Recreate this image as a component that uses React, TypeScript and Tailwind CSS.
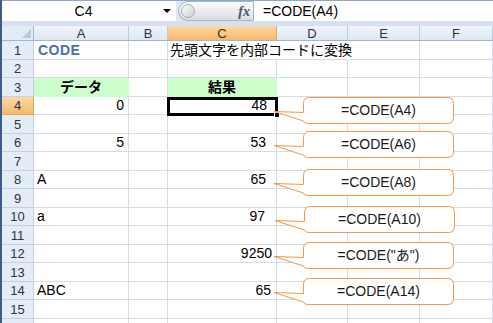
import React from "react";

const cols = [
  { key: "A", w: "w-[95px]" },
  { key: "B", w: "w-[39px]" },
  { key: "C", w: "w-[109px]" },
  { key: "D", w: "w-[71px]" },
  { key: "E", w: "w-[72px]" },
  { key: "F", w: "flex-1" },
];

const rowHeights = [19, 18, 19, 18, 19, 18, 19, 18, 19, 18, 19, 18, 19, 18, 19, 18];

type Cell = { text: string; cls: string; green?: boolean };

const cells: Record<string, Cell> = {
  "1A": { text: "CODE", cls: "justify-start pl-[4px] font-bold text-[#4f6fa6] tracking-[0.5px]" },
  "1C": { text: "先頭文字を内部コードに変換", cls: "justify-start pl-[2px]" },
  "3A": { text: "データ", cls: "justify-center font-bold", green: true },
  "3C": { text: "結果", cls: "justify-center font-bold", green: true },
  "4A": { text: "0", cls: "justify-end pr-[4px]" },
  "4C": { text: "48", cls: "justify-end pr-[9px]" },
  "6A": { text: "5", cls: "justify-end pr-[4px]" },
  "6C": { text: "53", cls: "justify-end pr-[10px]" },
  "8A": { text: "A", cls: "justify-start pl-[3px]" },
  "8C": { text: "65", cls: "justify-end pr-[10px]" },
  "10A": { text: "a", cls: "justify-start pl-[3px]" },
  "10C": { text: "97", cls: "justify-end pr-[11px]" },
  "12C": { text: "9250", cls: "justify-end pr-[4px]" },
  "14A": { text: "ABC", cls: "justify-start pl-[3px]" },
  "14C": { text: "65", cls: "justify-end pr-[5px]" },
};

// left values are page x; the sheet has a 2px left border, so subtract it
const callouts = [
  { top: 97, left: 303, text: "=CODE(A4)" },
  { top: 131, left: 303, text: "=CODE(A6)" },
  { top: 169, left: 303, text: "=CODE(A8)" },
  { top: 206, left: 304, text: "=CODE(A10)" },
  { top: 242, left: 303, text: "=CODE(\"あ\")" },
  { top: 278, left: 303, text: "=CODE(A14)" },
];

function Callout({ top, left, text }: { top: number; left: number; text: string }) {
  return (
    <div className="absolute h-[28px] w-[186px]" style={{ top, left: left - 35 }}>
      <svg width="186" height="28" className="absolute left-0 top-0">
        <path
          d="M39.5 0.5 H177.5 Q183.5 0.5 183.5 6.5 V20.5 Q183.5 26.5 177.5 26.5 H39.5 Q34 26.5 33.5 24 L4 14.5 L33.5 15.5 V6.5 Q33.5 0.5 39.5 0.5 Z"
          fill="#ffffff"
          stroke="#f79646"
          strokeWidth="1"
        />
      </svg>
      <div className="absolute left-[33px] top-0 flex h-[27px] w-[151px] items-center justify-center text-[14px] text-[#1a1a1a]">
        {text}
      </div>
    </div>
  );
}

export default function App() {
  return (
    <div className="relative h-[323px] w-[493px] overflow-hidden border-l-2 border-[#3d5c86] bg-white font-['Liberation_Sans','Noto_Sans_CJK_JP',sans-serif] text-[14px] text-black">
      {/* formula bar */}
      <div className="flex h-[21px] border-t border-[#8ea6c8] bg-[#dfe7f2]">
        <div className="flex w-[174px] items-center bg-white">
          <span className="flex-1 pl-[2px] text-center text-[14px]">C4</span>
          <span className="mr-[5px] h-0 w-0 border-x-[4px] border-t-[4px] border-x-transparent border-t-black" />
        </div>
        <div className="ml-[2px] flex w-[75px] items-center rounded-l-full border border-r-0 border-[#a8b4c4] bg-gradient-to-b from-[#fbfbfc] to-[#d9dde4]">
          <span className="ml-[2px] h-[14px] w-[14px] rounded-full border border-[#a4acb8] bg-gradient-to-br from-white to-[#c9ced6]" />
          <span className="ml-auto mr-[3px] font-['Liberation_Serif',serif] text-[14px] font-bold italic text-[#4b5566]">
            fx
          </span>
        </div>
        <div className="flex flex-1 items-center border-l border-[#a8b4c4] bg-white pl-[9px] text-[14px]">
          =CODE(A4)
        </div>
      </div>
      <div className="h-[5px] bg-[#d7e1ee]" />

      {/* column headers */}
      <div className="flex h-[15px] border-b border-[#9eb6ce] text-[13px] text-[#333]">
        <div className="relative w-[32px] border-r border-[#9eb6ce] bg-[#e4ebf5]">
          <span className="absolute bottom-[2px] right-[2px] h-0 w-0 border-b-[9px] border-l-[9px] border-b-[#b7c7dc] border-l-transparent" />
        </div>
        {cols.map((c) => (
          <div
            key={c.key}
            className={`${c.w} flex items-center justify-center border-r leading-none ${
              c.key === "C"
                ? "border-[#e8a553] bg-gradient-to-b from-[#fbd9a6] to-[#f6b868]"
                : "border-[#bccbde] bg-gradient-to-b from-[#f1f5fb] to-[#dde6f2]"
            }`}
          >
            {c.key}
          </div>
        ))}
      </div>

      {/* rows */}
      {rowHeights.map((h, i) => {
        const r = i + 1;
        return (
          <div key={r} className="flex" style={{ height: h }}>
            <div
              className={`flex w-[32px] items-center justify-center border-b border-r text-[13px] leading-none text-[#333] ${
                r === 4
                  ? "border-[#e8a553] bg-gradient-to-b from-[#fbd9a6] to-[#f6b868]"
                  : "border-[#c3d0e2] bg-[#e4ecf7]"
              }`}
            >
              {r}
            </div>
            {cols.map((c) => {
              const cell = cells[`${r}${c.key}`];
              const hideRight = r === 1 && (c.key === "C" || c.key === "D");
              return (
                <div
                  key={c.key}
                  className={`${c.w} flex items-end whitespace-nowrap border-b border-r pb-[1px] leading-[15px] ${
                    cell?.green ? "border-[#ccffcc] bg-[#ccffcc]" : "border-[#d5dae3]"
                  } ${hideRight ? "border-r-transparent" : ""} ${cell?.cls ?? ""}`}
                >
                  {cell?.text}
                </div>
              );
            })}
          </div>
        );
      })}

      {/* active cell C4 */}
      <div className="absolute left-[165px] top-[97px] h-[19px] w-[111px] border-[3px] border-black" />
      <div className="absolute left-[272px] top-[112px] h-[6px] w-[6px] border border-white bg-black" />

      {callouts.map((c) => (
        <Callout key={c.top} {...c} />
      ))}
    </div>
  );
}
